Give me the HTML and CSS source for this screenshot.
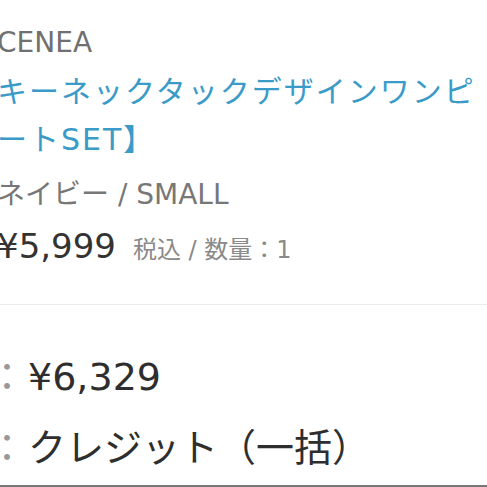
FILE: index.html
```html
<!DOCTYPE html>
<html lang="ja">
<head>
    <meta charset="UTF-8">
    <meta name="viewport" content="width=device-width, initial-scale=1.0">
    <title>注文内容</title>
    <link rel="stylesheet" href="styles.css">
</head>
<body>
    <div class="order">
        <!-- 商品 -->
        <section class="order-item">
            <p class="item-brand">CENEA</p>
            <h2 class="item-name">
                <span>キーネックタックデザインワンピ</span>
                <span>ートSET】</span>
            </h2>
            <p class="item-variant">ネイビー / SMALL</p>
            <div class="item-price">
                <span class="price">¥5,999</span>
                <span class="price-note">税込 / 数量：1</span>
            </div>
        </section>

        <!-- 合計・支払い -->
        <div class="order-summary">
            <div class="summary-row">
                <span class="summary-sep">：</span>
                <span class="summary-value">¥6,329</span>
            </div>
            <div class="summary-row">
                <span class="summary-sep">：</span>
                <span class="summary-value">クレジット（一括）</span>
            </div>
        </div>
    </div>
</body>
</html>
```

FILE: styles.css
```css
/* Estilos generales */
body {
    margin: 0;
    background-color: #fff;
    font-family: "DejaVu Sans", "Noto Sans CJK JP", sans-serif;
    overflow: hidden;
}

.order {
    margin-left: -3px;
    padding-top: 23px;
}

.order p {
    margin: 0;
}

/* Producto */
.order-item {
    padding-bottom: 36px;
    border-bottom: 1px solid #ececec;
}

.item-brand {
    font-size: 28px;
    line-height: 40px;
    color: #707070;
}

.item-name {
    margin: 5px 0 0;
    font-size: 30px;
    font-weight: normal;
    line-height: 48px;
    letter-spacing: 2px;
    color: #3b9bc8;
    white-space: nowrap;
}

.item-name span {
    display: block;
}

.item-variant {
    margin-top: 11px !important;
    font-size: 28px;
    line-height: 40px;
    color: #777;
}

.item-price {
    display: flex;
    align-items: baseline;
    gap: 17px;
    margin-top: 9px;
}

.price {
    font-size: 34px;
    line-height: 44px;
    color: #333;
}

.price-note {
    font-size: 24px;
    line-height: 30px;
    color: #8a8a8a;
}

/* Resumen */
.order-summary {
    padding-top: 44px;
    padding-bottom: 9px;
    border-bottom: 2px solid #777;
}

.summary-row {
    display: flex;
    align-items: baseline;
    gap: 2px;
    font-size: 38px;
    line-height: 56px;
    white-space: nowrap;
}

.summary-row + .summary-row {
    margin-top: 15px;
}

.summary-sep {
    margin-left: -9px;
    color: #999;
}

.summary-value {
    color: #2e2e2e;
}
```
